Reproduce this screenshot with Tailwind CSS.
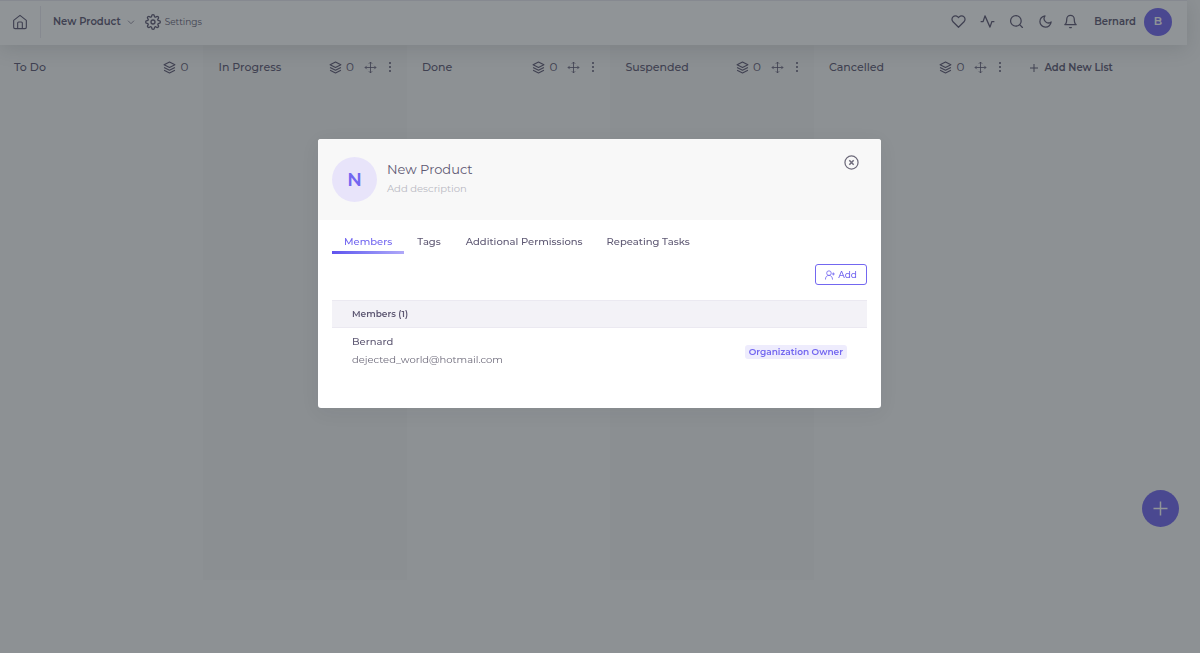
<!DOCTYPE html>
<html lang="en">
<head>
    <meta charset="UTF-8">
    <meta name="viewport" content="width=device-width, initial-scale=1.0">
    <title>New Product - Board</title>
    <script src="https://cdn.jsdelivr.net/npm/@tailwindcss/browser@4"></script>
</head>
<body class="min-h-screen bg-[#f8f8f8] text-[#5e5873] font-[Montserrat,Inter,sans-serif] overflow-hidden">

    <!-- Icons -->
    <svg class="hidden">
        <symbol id="layers" viewBox="0 0 24 24">
            <path d="M12 2 2 7l10 5 10-5-10-5zM2 17l10 5 10-5M2 12l10 5 10-5"/>
        </symbol>
        <symbol id="move" viewBox="0 0 24 24">
            <path d="m5 9-3 3 3 3M9 5l3-3 3 3M15 19l-3 3-3-3M19 9l3 3-3 3M2 12h20M12 2v20"/>
        </symbol>
        <symbol id="dots" viewBox="0 0 4 12">
            <path d="M2 2v.01M2 6v.01M2 10v.01"/>
        </symbol>
        <symbol id="plus" viewBox="0 0 24 24">
            <path d="M12 4v16M4 12h16"/>
        </symbol>
    </svg>

    <!-- Navbar -->
    <header class="relative mr-[13px] flex h-[45px] items-center border-t border-[#ebe9f1] bg-white pl-3 pr-[15px] pb-[3px] shadow-[0_4px_20px_rgba(34,41,47,0.14)]">
        <a href="#" aria-label="Home" class="flex">
            <svg class="size-4 fill-none stroke-current stroke-[1.7] [stroke-linejoin:round]" viewBox="0 0 24 24">
                <path d="M2.500 9.500 12 2l9.500 7.500V20a2 2 0 0 1-2 2h-15a2 2 0 0 1-2-2z"/>
                <path d="M8.500 22v-8.500a1.500 1.500 0 0 1 1.500-1.500h4a1.500 1.500 0 0 1 1.500 1.500V22"/>
            </svg>
        </a>
        <div class="ml-3 h-8 border-l border-[#ebe9f1]"></div>
        <button class="ml-3 flex items-center gap-1.5 text-[10px] font-semibold">
            New Product
            <svg class="size-2 fill-none stroke-current stroke-2" viewBox="0 0 24 24"><path d="m3 8 9 9 9-9"/></svg>
        </button>
        <a href="#" class="ml-2.5 flex items-center gap-1 text-[9px]">
            <svg class="size-4 fill-none stroke-current stroke-2 [stroke-linejoin:round]" viewBox="0 0 24 24">
                <circle cx="12" cy="12" r="3"/>
                <path d="M19.400 15a1.650 1.650 0 0 0 .33 1.820l.06.06a2 2 0 1 1-2.830 2.830l-.06-.06a1.650 1.650 0 0 0-2.800 1.180V21a2 2 0 0 1-4 0v-.09a1.650 1.650 0 0 0-2.900-1.260l-.06.06a2 2 0 1 1-2.830-2.830l.06-.06A1.650 1.650 0 0 0 3.090 14H3a2 2 0 0 1 0-4h.09a1.650 1.650 0 0 0 1.260-2.900l-.06-.06a2 2 0 1 1 2.830-2.830l.06.06A1.650 1.650 0 0 0 10 3.090V3a2 2 0 0 1 4 0v.09a1.650 1.650 0 0 0 2.820 1.180l.06-.06a2 2 0 1 1 2.830 2.830l-.06.06A1.650 1.650 0 0 0 20.910 10H21a2 2 0 0 1 0 4h-.09a1.650 1.650 0 0 0-1.510 1z"/>
            </svg>
            Settings
        </a>

        <div class="ml-auto flex items-center">
            <div class="flex items-center gap-3.5">
                <button aria-label="Favourites">
                    <svg class="size-[15px] fill-none stroke-current stroke-2 [stroke-linejoin:round]" viewBox="0 0 24 24"><path d="M20.840 4.610a5.500 5.500 0 0 0-7.780 0L12 5.670l-1.060-1.060a5.500 5.500 0 0 0-7.780 7.780L12 21.230l8.840-8.840a5.500 5.500 0 0 0 0-7.780z"/></svg>
                </button>
                <button aria-label="Activity">
                    <svg class="size-[15px] fill-none stroke-current stroke-2 [stroke-linejoin:round]" viewBox="0 0 24 24"><path d="M23 12h-4l-3 9L8 3l-3 9H1"/></svg>
                </button>
                <button aria-label="Search">
                    <svg class="size-[15px] fill-none stroke-current stroke-2 [stroke-linecap:round]" viewBox="0 0 24 24"><circle cx="11" cy="11" r="8.500"/><path d="m21.500 21.500-4.500-4.500"/></svg>
                </button>
                <button aria-label="Dark mode">
                    <svg class="size-[15px] fill-none stroke-current stroke-2 [stroke-linejoin:round]" viewBox="0 0 24 24"><path d="M21 12.790A9 9 0 1 1 11.210 3 7 7 0 0 0 21 12.790z"/></svg>
                </button>
            </div>
            <button aria-label="Notifications" class="ml-2.5">
                <svg class="size-[15px] fill-none stroke-current stroke-2 [stroke-linejoin:round]" viewBox="0 0 24 24"><path d="M18 8A6 6 0 0 0 6 8c0 7-3 9-3 9h18s-3-2-3-9M13.730 21a2 2 0 0 1-3.460 0"/></svg>
            </button>
            <button class="ml-4 flex items-center gap-2 text-[10px] font-semibold">
                Bernard
                <span class="flex size-7 items-center justify-center rounded-full bg-[#7367f0] text-[11px] text-white">B</span>
            </button>
        </div>
    </header>

    <!-- Board -->
    <main class="flex pr-[3px] text-xs">
        <section class="flex h-[535px] w-[17%] items-start justify-between pt-3.5 pl-3.5 pr-[15px]">
            <h2 class="text-[11px] leading-4 font-medium">To Do</h2>
            <div class="flex items-center gap-1">
                <svg class="size-[13px] fill-none stroke-current stroke-2 [stroke-linejoin:round]"><use href="#layers"/></svg>
                <span class="w-2">0</span>
            </div>
        </section>
        <section class="flex h-[535px] w-[17%] items-start justify-between bg-[#f4f4f4] pt-3.5 pl-[15px] pr-[15px]">
            <h2 class="text-[11px] leading-4 font-medium">In Progress</h2>
            <div class="flex items-center gap-1">
                <svg class="size-[13px] fill-none stroke-current stroke-2 [stroke-linejoin:round]"><use href="#layers"/></svg>
                <span class="w-2">0</span>
                <button aria-label="Move list" class="ml-1.5"><svg class="size-[13px] fill-none stroke-current stroke-[1.5]"><use href="#move"/></svg></button>
                <button aria-label="List menu" class="ml-[7px]"><svg class="h-3 w-1 fill-none stroke-current stroke-2 [stroke-linecap:round]"><use href="#dots"/></svg></button>
            </div>
        </section>
        <section class="flex h-[535px] w-[17%] items-start justify-between pt-3.5 pl-[15px] pr-[15px]">
            <h2 class="text-[11px] leading-4 font-medium">Done</h2>
            <div class="flex items-center gap-1">
                <svg class="size-[13px] fill-none stroke-current stroke-2 [stroke-linejoin:round]"><use href="#layers"/></svg>
                <span class="w-2">0</span>
                <button aria-label="Move list" class="ml-1.5"><svg class="size-[13px] fill-none stroke-current stroke-[1.5]"><use href="#move"/></svg></button>
                <button aria-label="List menu" class="ml-[7px]"><svg class="h-3 w-1 fill-none stroke-current stroke-2 [stroke-linecap:round]"><use href="#dots"/></svg></button>
            </div>
        </section>
        <section class="flex h-[535px] w-[17%] items-start justify-between bg-[#f4f4f4] pt-3.5 pl-[15px] pr-[15px]">
            <h2 class="text-[11px] leading-4 font-medium">Suspended</h2>
            <div class="flex items-center gap-1">
                <svg class="size-[13px] fill-none stroke-current stroke-2 [stroke-linejoin:round]"><use href="#layers"/></svg>
                <span class="w-2">0</span>
                <button aria-label="Move list" class="ml-1.5"><svg class="size-[13px] fill-none stroke-current stroke-[1.5]"><use href="#move"/></svg></button>
                <button aria-label="List menu" class="ml-[7px]"><svg class="h-3 w-1 fill-none stroke-current stroke-2 [stroke-linecap:round]"><use href="#dots"/></svg></button>
            </div>
        </section>
        <section class="flex h-[535px] w-[17%] items-start justify-between pt-3.5 pl-[15px] pr-[15px]">
            <h2 class="text-[11px] leading-4 font-medium">Cancelled</h2>
            <div class="flex items-center gap-1">
                <svg class="size-[13px] fill-none stroke-current stroke-2 [stroke-linejoin:round]"><use href="#layers"/></svg>
                <span class="w-2">0</span>
                <button aria-label="Move list" class="ml-1.5"><svg class="size-[13px] fill-none stroke-current stroke-[1.5]"><use href="#move"/></svg></button>
                <button aria-label="List menu" class="ml-[7px]"><svg class="h-3 w-1 fill-none stroke-current stroke-2 [stroke-linecap:round]"><use href="#dots"/></svg></button>
            </div>
        </section>
        <button class="ml-[11px] mt-[15px] flex h-4 items-center gap-1 text-[10px] font-semibold">
            <svg class="size-3 fill-none stroke-current stroke-2"><use href="#plus"/></svg>
            Add New List
        </button>
    </main>

    <button aria-label="Add task" class="fixed right-[21px] bottom-[126px] flex size-[37px] items-center justify-center rounded-full bg-[#7367f0] text-white">
        <svg class="size-[21px] fill-none stroke-current stroke-[1.7]"><use href="#plus"/></svg>
    </button>

    <!-- Project modal -->
    <div class="fixed inset-0 flex items-start justify-center bg-[#22292f]/50 pt-[139px] pr-px">
        <div role="dialog" aria-label="New Product" class="w-full max-w-[563px] overflow-hidden rounded-[3px] bg-white pb-10 shadow-[0_4px_20px_rgba(34,41,47,0.06)]">
            <div class="flex h-[81px] items-center gap-2.5 bg-[#f8f8f8] pl-3.5 pr-[22px]">
                <div class="flex size-[45px] items-center justify-center rounded-full bg-[#e8e4fa] text-lg font-semibold text-[#7367f0]">N</div>
                <div class="pb-0.5">
                    <h1 class="text-[13px] leading-5">New Product</h1>
                    <p class="text-[10px] leading-5 text-[#b9b9c3]">Add description</p>
                </div>
                <button aria-label="Close" class="ml-auto mt-4 self-start text-[#6e6b7b]">
                    <svg class="size-[15px] fill-none stroke-current" viewBox="0 0 24 24">
                        <circle cx="12" cy="12" r="10.500" stroke-width="2"/>
                        <path d="m8.500 8.500 7 7M15.500 8.500l-7 7" stroke-width="2.500"/>
                    </svg>
                </button>
            </div>

            <div class="px-3.5">
                <div role="tablist" class="flex text-[10px] font-medium">
                    <button role="tab" aria-selected="true" class="relative h-[34px] px-3 pt-2 text-[#7367f0]">
                        Members
                        <span class="absolute inset-x-0 bottom-0 h-[3px] bg-linear-to-r from-[#6052ee] to-[#b0a8f8]"></span>
                    </button>
                    <button role="tab" class="h-[34px] px-[13px] pt-2">Tags</button>
                    <button role="tab" class="h-[34px] px-3 pt-2">Additional Permissions</button>
                    <button role="tab" class="h-[34px] px-3 pt-2">Repeating Tasks</button>
                </div>

                <div class="mt-2.5 flex justify-end">
                    <button class="flex h-[21px] items-center gap-[3px] rounded-[3px] border border-[#7367f0] px-[9px] text-[9px] font-medium text-[#7367f0]">
                        <svg class="size-2.5 fill-none stroke-current stroke-2" viewBox="0 0 24 24">
                            <circle cx="9.500" cy="7.500" r="5.500"/>
                            <path d="M1 23c0-6 3-10 8.500-10S18 17 18 23M20 6v7M16.500 9.500h7"/>
                        </svg>
                        Add
                    </button>
                </div>

                <table class="mt-[15px] w-full text-left">
                    <thead>
                        <tr class="h-[27px] border-y border-[#ebe9f1] bg-[#f3f2f7] text-[9px]">
                            <th colspan="2" class="px-5 pb-px font-semibold">Members (1)</th>
                        </tr>
                    </thead>
                    <tbody>
                        <tr class="text-[10px]">
                            <td class="pl-5 pt-1.5">
                                <div class="leading-4 font-medium">Bernard</div>
                                <div class="mt-0.5 leading-4 text-[#6e6b7b]">dejected_world@hotmail.com</div>
                            </td>
                            <td class="pr-5 pt-1.5 text-right">
                                <span class="inline-block rounded-[3px] bg-[#eeecfd] px-1 text-[9px] leading-[14px] font-semibold text-[#7367f0]">Organization Owner</span>
                            </td>
                        </tr>
                    </tbody>
                </table>
            </div>
        </div>
    </div>

</body>
</html>
